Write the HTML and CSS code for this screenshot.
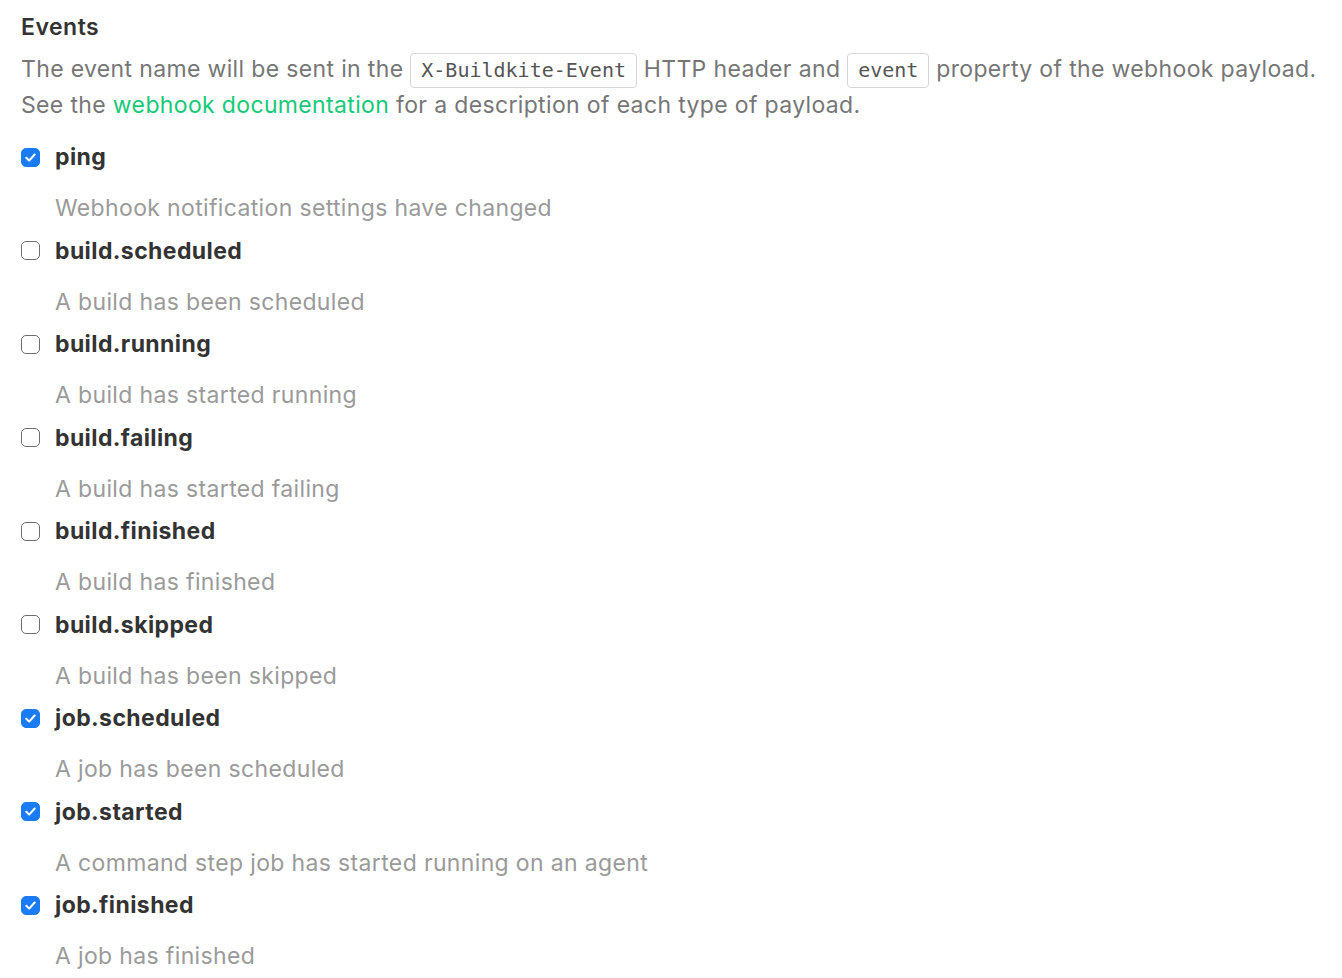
FILE: index.html
```html
<!DOCTYPE html>
<html lang="en">
<head>
<meta charset="utf-8">
<title>Webhook events</title>
<link rel="stylesheet" href="styles.css">
</head>
<body>
<section class="events">
  <h3 class="events-title">Events</h3>
  <p class="events-intro">The event name will be sent in the <code>X-Buildkite-Event</code> HTTP header and <code>event</code> property of the webhook payload.<br>See the <a href="#">webhook documentation</a> for a description of each type of payload.</p>

  <ul class="event-list">
    <li class="event">
      <label class="event-label"><span class="check is-checked"><svg viewBox="0 0 20 20"><path d="M5.6 10.3l3 3 5.8-6.4"/></svg></span>ping</label>
      <p class="event-hint">Webhook notification settings have changed</p>
    </li>
    <li class="event">
      <label class="event-label"><span class="check"></span>build.scheduled</label>
      <p class="event-hint">A build has been scheduled</p>
    </li>
    <li class="event">
      <label class="event-label"><span class="check"></span>build.running</label>
      <p class="event-hint">A build has started running</p>
    </li>
    <li class="event">
      <label class="event-label"><span class="check"></span>build.failing</label>
      <p class="event-hint">A build has started failing</p>
    </li>
    <li class="event">
      <label class="event-label"><span class="check"></span>build.finished</label>
      <p class="event-hint">A build has finished</p>
    </li>
    <li class="event">
      <label class="event-label"><span class="check"></span>build.skipped</label>
      <p class="event-hint">A build has been skipped</p>
    </li>
    <li class="event">
      <label class="event-label"><span class="check is-checked"><svg viewBox="0 0 20 20"><path d="M5.6 10.3l3 3 5.8-6.4"/></svg></span>job.scheduled</label>
      <p class="event-hint">A job has been scheduled</p>
    </li>
    <li class="event">
      <label class="event-label"><span class="check is-checked"><svg viewBox="0 0 20 20"><path d="M5.6 10.3l3 3 5.8-6.4"/></svg></span>job.started</label>
      <p class="event-hint">A command step job has started running on an agent</p>
    </li>
    <li class="event">
      <label class="event-label"><span class="check is-checked"><svg viewBox="0 0 20 20"><path d="M5.6 10.3l3 3 5.8-6.4"/></svg></span>job.finished</label>
      <p class="event-hint">A job has finished</p>
    </li>
  </ul>
</section>
</body>
</html>
```

FILE: styles.css
```css
html, body {
  margin: 0;
  background: #fff;
}

body {
  font-family: Inter, "Noto Sans", "Liberation Sans", sans-serif;
  font-size: 23px;
  letter-spacing: 0.35px;
  color: #333;
}

.events {
  padding: 10px 21px 0;
}

.events-title {
  margin: 0;
  font-size: 23px;
  line-height: 34px;
  font-weight: 600;
  letter-spacing: 0.5px;
  color: #333;
}

.events-intro {
  margin: 8px 0 0;
  font-size: 23px;
  line-height: 34px;
  color: #767676;
}

.events-intro code {
  display: inline-block;
  font-family: "DejaVu Sans Mono", "Liberation Mono", monospace;
  font-size: 20px;
  line-height: 33px;
  letter-spacing: 0;
  padding: 0 10px;
  border: 1px solid #d6d6d6;
  border-radius: 4px;
  color: #555;
}

.events-intro a {
  color: #16c977;
  text-decoration: none;
}

.event-list {
  list-style: none;
  margin: 18px 0 0;
  padding: 0;
}

.event {
  height: 93.5px;
}

.event-label {
  display: flex;
  align-items: center;
  gap: 15px;
  height: 34px;
  font-size: 23px;
  font-weight: 700;
  letter-spacing: 0.4px;
  color: #333;
}

.check {
  flex: none;
  width: 19px;
  height: 19px;
  box-sizing: border-box;
  border: 1.8px solid #6e6e6e;
  border-radius: 5px;
  display: flex;
  align-items: center;
  justify-content: center;
}

.check.is-checked {
  background: #1a7cf5;
  border-color: #1a7cf5;
}

.check svg {
  flex: none;
  width: 19px;
  height: 19px;
}

.check path {
  fill: none;
  stroke: #fff;
  stroke-width: 2.2;
  stroke-linecap: round;
  stroke-linejoin: round;
}

.event-hint {
  margin: 17px 0 0 34px;
  font-size: 23px;
  line-height: 34px;
  color: #9a9a9a;
}
```
